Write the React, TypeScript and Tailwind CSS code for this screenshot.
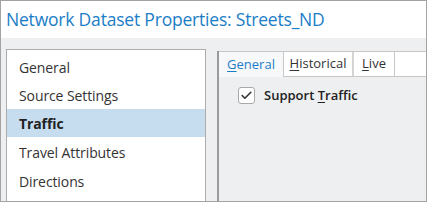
import { Check } from "lucide-react";

const items = ["General", "Source Settings", "Traffic", "Travel Attributes", "Directions"];

export default function App() {
  return (
    <div
      className="w-[427px] h-[202px] border border-[#a3a3a3] bg-[#eeeff1] flex flex-col overflow-hidden"
      style={{ fontFamily: '"Open Sans", "Noto Sans", sans-serif' }}
    >
      {/* Title */}
      <div className="h-[37px] bg-white flex items-center pl-[5px] shrink-0">
        <span className="text-[17.5px] text-[#1b7dc6] tracking-[-0.2px]">Network Dataset Properties: Streets_ND</span>
      </div>

      <div className="flex flex-1 pt-[11px] pl-[5px] min-h-0">
        {/* Page list */}
        <div className="w-[200px] border-t border-l border-r border-[#acacac] bg-white pt-[3px] shrink-0">
          {items.map((name, i) => (
            <div
              key={name}
              className={`flex items-center pl-[12px] text-[14px] tracking-[-0.1px] ${i > 2 ? "h-[29px] pt-[2px]" : "h-[28px]"} ${
                name === "Traffic" ? "bg-[#c6dcef] font-bold text-[#222]" : "text-[#333]"
              }`}
            >
              {name}
            </div>
          ))}
        </div>

        {/* Tab panel */}
        <div className="ml-[11px] mt-[2px] flex-1 flex flex-col border-l-2 border-[#9a9a9a] min-w-0">
          <div className="h-[26px] bg-white border-t border-[#c8c8c8] flex items-stretch shrink-0">
            <div className="w-[65px] bg-[#f7f8f9] border-r border-[#c8c8c8] flex items-center justify-center text-[13px] text-[#1b7dc6]">
              <span><u className="underline-offset-2">G</u>eneral</span>
            </div>
            <div className="w-[70px] border-r-2 border-[#d4d4d4] border-b border-b-[#c8c8c8] flex items-center justify-center text-[13px] text-[#333]">
              <span><u className="underline-offset-2">H</u>istorical</span>
            </div>
            <div className="w-[41px] border-r border-[#c8c8c8] border-b border-b-[#c8c8c8] flex items-center justify-center text-[13px] text-[#333]">
              <span><u className="underline-offset-2">L</u>ive</span>
            </div>
            <div className="flex-1 border-b border-[#c8c8c8]" />
          </div>

          <div className="flex-1 bg-[#eeeff1] pt-[9px] pl-[19px]">
            <label className="flex items-center gap-[9px]">
              <span className="w-[17px] h-[17px] rounded-[3px] border border-[#a8a8a8] bg-white flex items-center justify-center">
                <Check className="w-[13px] h-[13px] text-[#333]" strokeWidth={3} />
              </span>
              <span className="text-[13px] font-semibold text-[#222]">
                Support <u className="underline-offset-2">T</u>raffic
              </span>
            </label>
          </div>
        </div>
      </div>
    </div>
  );
}
